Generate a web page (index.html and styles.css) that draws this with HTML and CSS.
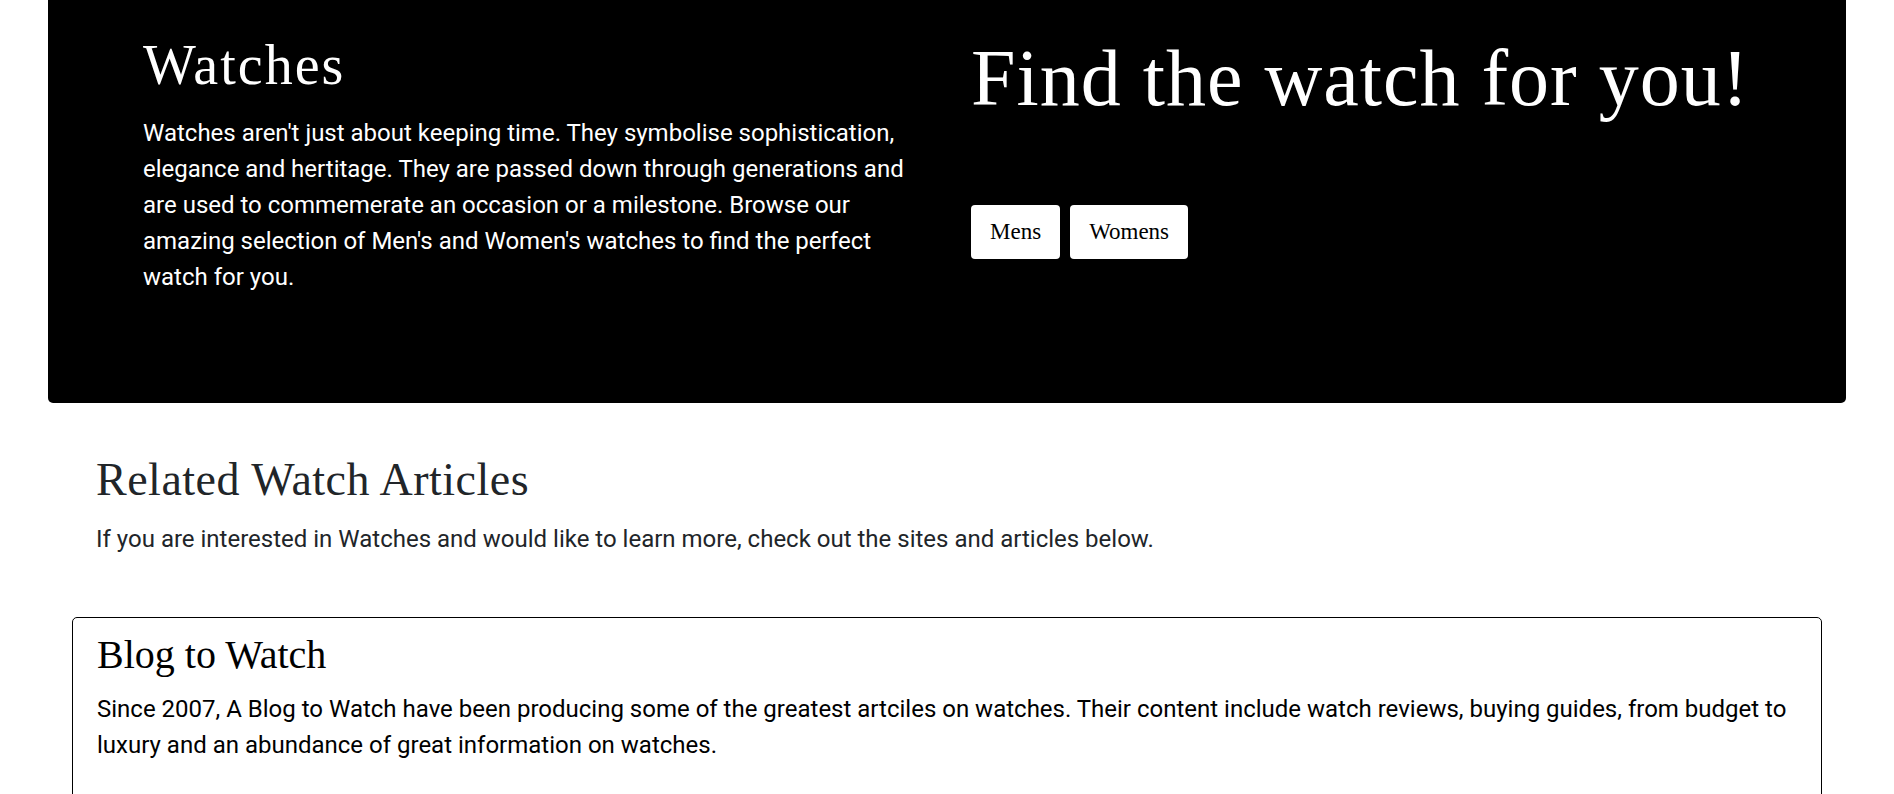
FILE: index.html
```html
<!DOCTYPE html>
<html lang="en">
<head>
<meta charset="utf-8">
<title>Watches</title>
<link rel="stylesheet" href="styles.css">
</head>
<body>
<section class="hero">
  <div class="hero-intro">
    <h1 class="hero-title">Watches</h1>
    <p class="hero-text">Watches aren't just about keeping time. They symbolise sophistication, elegance and hertitage. They are passed down through generations and are used to commemerate an occasion or a milestone. Browse our amazing selection of Men's and Women's watches to find the perfect watch for you.</p>
  </div>
  <div class="hero-cta">
    <h2 class="hero-cta-title">Find the watch for you!</h2>
    <div class="hero-buttons">
      <button class="hero-btn" type="button">Mens</button>
      <button class="hero-btn" type="button">Womens</button>
    </div>
  </div>
</section>

<section class="related">
  <div class="related-head">
    <h2 class="related-title">Related Watch Articles</h2>
    <p class="related-text">If you are interested in Watches and would like to learn more, check out the sites and articles below.</p>
  </div>
  <article class="card">
    <h3 class="card-title">Blog to Watch</h3>
    <p class="card-text">Since 2007, A Blog to Watch have been producing some of the greatest artciles on watches. Their content include watch reviews, buying guides, from budget to luxury and an abundance of great information on watches.</p>
  </article>
</section>
</body>
</html>
```

FILE: styles.css
```css
* {
  box-sizing: border-box;
}

body {
  margin: 0;
  background: #ffffff;
  font-family: Roboto, "Liberation Sans", Arial, sans-serif;
  color: #212529;
}

.hero {
  margin: 0 48px;
  background: #000000;
  color: #ffffff;
  border-radius: 0 0 5px 5px;
  display: grid;
  grid-template-columns: 780px 1fr;
  column-gap: 48px;
  padding: 0 48px 0 95px;
  height: 403px;
}

.hero-title {
  margin: 32px 0 0;
  font-family: "Liberation Serif", "DejaVu Serif", serif;
  font-weight: 400;
  font-size: 56px;
  line-height: 1.2;
  letter-spacing: 2px;
}

.hero-text {
  margin: 16px 0 0;
  font-size: 24px;
  line-height: 36px;
}

.hero-cta-title {
  margin: 30px 0 0;
  font-family: "Liberation Serif", "DejaVu Serif", serif;
  font-weight: 400;
  font-size: 80px;
  line-height: 1.2;
  letter-spacing: 1px;
}

.hero-buttons {
  display: flex;
  gap: 10px;
  margin-top: 79px;
}

.hero-btn {
  background: #ffffff;
  color: #000000;
  border: none;
  border-radius: 4px;
  font-family: "Liberation Serif", "DejaVu Serif", serif;
  font-size: 23px;
  line-height: 26px;
  padding: 14px 19px;
}

.related {
  margin: 0 72px;
}

.related-head {
  padding: 49px 24px 0;
}

.related-title {
  margin: 0;
  font-family: "Liberation Serif", "DejaVu Serif", serif;
  font-weight: 400;
  font-size: 46px;
  line-height: 1.2;
  letter-spacing: 0.5px;
  color: #212529;
}

.related-text {
  margin: 14px 0 0;
  font-size: 24px;
  line-height: 36px;
  color: #212529;
}

.card {
  margin-top: 60px;
  border: 1px solid #000000;
  border-radius: 5px;
  padding: 13px 24px 40px;
  color: #000000;
}

.card-title {
  margin: 0;
  font-family: "Liberation Serif", "DejaVu Serif", serif;
  font-weight: 400;
  font-size: 40px;
  line-height: 1.2;
}

.card-text {
  margin: 12px 0 0;
  font-size: 24px;
  line-height: 36px;
}
```
